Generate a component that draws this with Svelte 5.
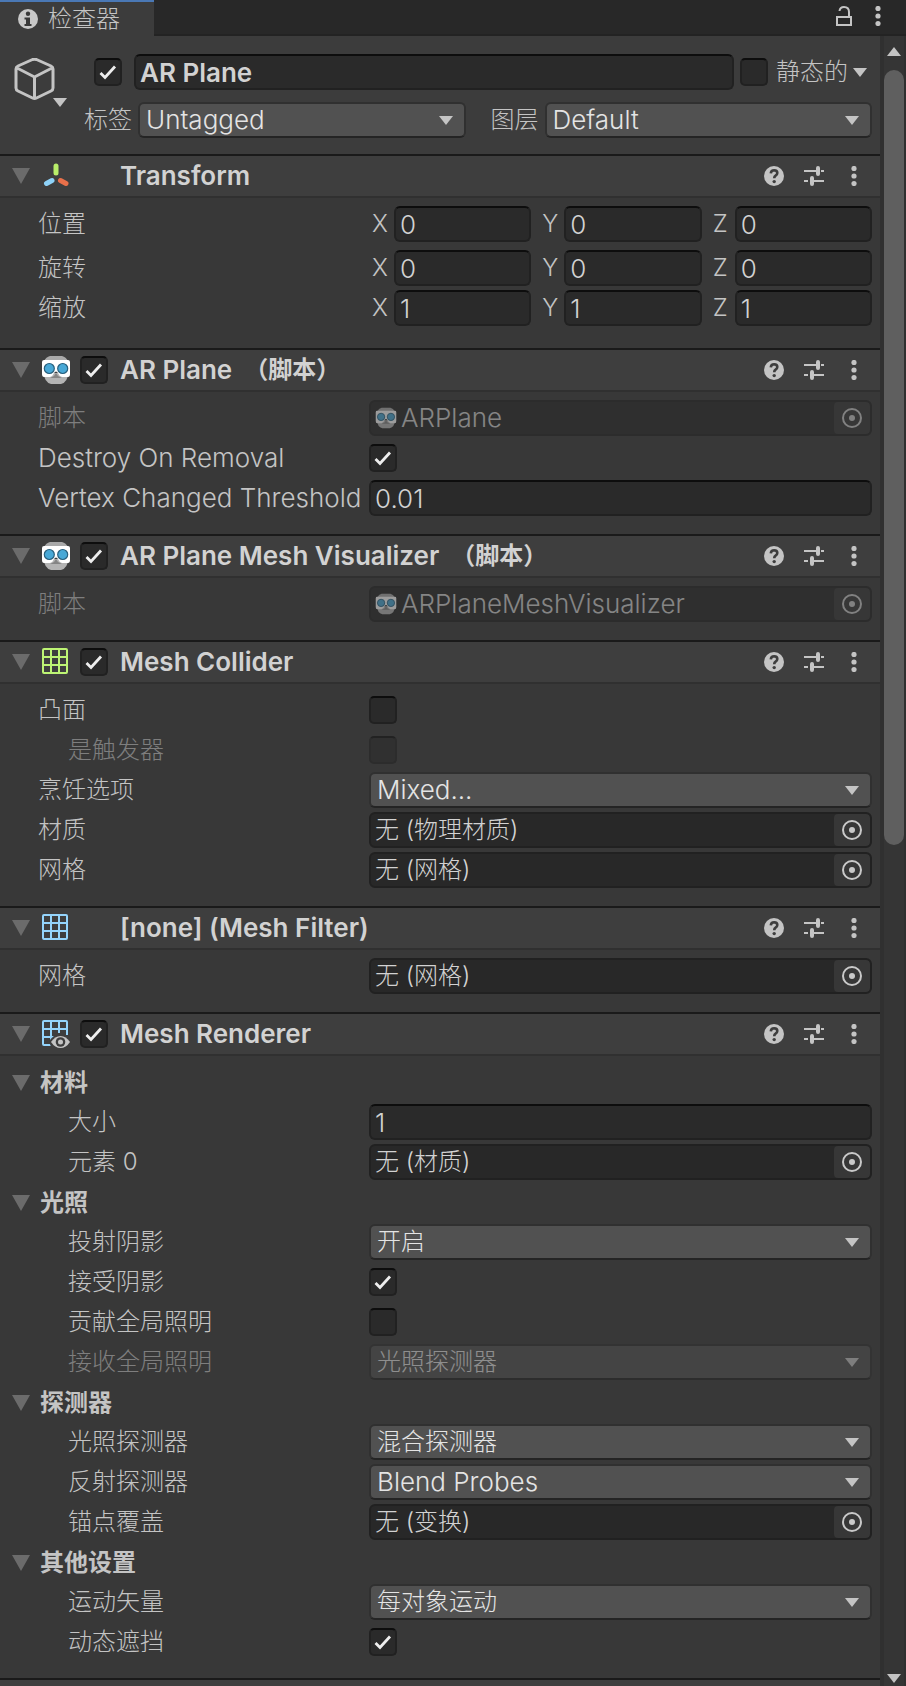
<script>
  const sections = [
    {
      id: 'transform', title: 'Transform', icon: 'axes', kind: 'transform',
      rows: [
        { type: 'vector', label: '位置', values: ['0', '0', '0'] },
        { type: 'vector', label: '旋转', values: ['0', '0', '0'] },
        { type: 'vector', label: '缩放', values: ['1', '1', '1'] }
      ]
    },
    {
      id: 'plane', title: 'AR Plane', suffix: '（脚本）', icon: 'robot', toggle: true,
      rows: [
        { type: 'object', label: '脚本', value: 'ARPlane', icon: true, disabled: true },
        { type: 'check', label: 'Destroy On Removal', checked: true },
        { type: 'text', label: 'Vertex Changed Threshold', value: '0.01' }
      ]
    },
    {
      id: 'visualizer', title: 'AR Plane Mesh Visualizer', suffix: '（脚本）', icon: 'robot', toggle: true,
      rows: [{ type: 'object', label: '脚本', value: 'ARPlaneMeshVisualizer', icon: true, disabled: true }]
    },
    {
      id: 'collider', title: 'Mesh Collider', icon: 'collider', toggle: true,
      rows: [
        { type: 'check', label: '凸面', checked: false },
        { type: 'check', label: '是触发器', checked: false, indent: true, disabled: true },
        { type: 'select', label: '烹饪选项', value: 'Mixed...' },
        { type: 'object', label: '材质', value: '无 (物理材质)' },
        { type: 'object', label: '网格', value: '无 (网格)' }
      ]
    },
    {
      id: 'filter', title: '[none] (Mesh Filter)', icon: 'filter',
      rows: [{ type: 'object', label: '网格', value: '无 (网格)' }]
    },
    {
      id: 'renderer', title: 'Mesh Renderer', icon: 'renderer', toggle: true,
      rows: [
        { type: 'group', label: '材料' },
        { type: 'text', label: '大小', value: '1', indent: true },
        { type: 'object', label: '元素 0', value: '无 (材质)', indent: true },
        { type: 'group', label: '光照' },
        { type: 'select', label: '投射阴影', value: '开启', indent: true },
        { type: 'check', label: '接受阴影', checked: true, indent: true },
        { type: 'check', label: '贡献全局照明', checked: false, indent: true },
        { type: 'select', label: '接收全局照明', value: '光照探测器', indent: true, disabled: true },
        { type: 'group', label: '探测器' },
        { type: 'select', label: '光照探测器', value: '混合探测器', indent: true },
        { type: 'select', label: '反射探测器', value: 'Blend Probes', indent: true },
        { type: 'object', label: '锚点覆盖', value: '无 (变换)', indent: true },
        { type: 'group', label: '其他设置' },
        { type: 'select', label: '运动矢量', value: '每对象运动', indent: true },
        { type: 'check', label: '动态遮挡', checked: true, indent: true }
      ]
    }
  ];
  const axes = ['X', 'Y', 'Z'];

  // Pure Latin strings are set one step larger than Chinese ones.
  const isLatin = (text) => /^[\x20-\x7e]+$/.test(text);
</script>

{#snippet dots()}
  <svg width="20" height="20" viewBox="0 0 20 20" fill="#c4c4c4" aria-hidden="true">
    <circle cx="10" cy="2.5" r="2.6" /><circle cx="10" cy="10" r="2.6" /><circle cx="10" cy="17.5" r="2.6" />
  </svg>
{/snippet}

{#snippet arrow()}
  <svg width="14" height="9" viewBox="0 0 14 9" aria-hidden="true"><path d="M0 0H14L7 9Z" fill="#c4c4c4" /></svg>
{/snippet}

{#snippet fold()}
  <svg width="18" height="16" viewBox="0 0 18 16" aria-hidden="true"><path d="M0 0H18L9 16Z" fill="#6b6b6b" /></svg>
{/snippet}

{#snippet robot(size)}
  <svg width={size} height={size} viewBox="0 0 30 30" aria-hidden="true">
    <path d="M9 1H21Q25 2 27 6H3Q5 2 9 1Z" fill="#a9a9a9" />
    <path d="M3 18H27Q27 27 20 29H10Q3 27 3 18Z" fill="#b4b4b4" />
    <path d="M13 21L15 18L17 21L21 23H9Z" fill="#858585" />
    <path d="M3 5H27Q29 5 29 7V19Q29 22 27 22H21Q18 21 17 18Q15 15 13 18Q12 21 9 22H3Q1 22 1 19V7Q1 5 3 5Z" fill="#fff" />
    <circle cx="8.3" cy="13.5" r="5" fill="#48a8d6" stroke="#275f7d" stroke-width="1.2" />
    <circle cx="21.7" cy="13.5" r="5" fill="#48a8d6" stroke="#275f7d" stroke-width="1.2" />
  </svg>
{/snippet}

{#snippet grid(color)}
  <rect x="2" y="2" width="24" height="24" rx="1" fill="none" stroke={color} stroke-width="2" />
  <path d="M10 2V26M18 2V26M2 10H26M2 18H26" fill="none" stroke={color} stroke-width="2" />
{/snippet}

{#snippet sectionIcon(name)}
  {#if name === 'robot'}
    {@render robot(30)}
  {:else}
    <svg width="30" height="30" viewBox="0 0 30 30" aria-hidden="true">
      {#if name === 'axes'}
        <g stroke-width="5" stroke-linecap="round" fill="none">
          <path d="M15 5V12" stroke="#b9ee6a" />
          <path d="M11 19.500L5.500 22.500" stroke="#8ed2f8" />
          <path d="M19.500 19.500L25 22.500" stroke="#e8704a" />
        </g>
      {:else if name === 'collider'}
        {@render grid('#bdf474')}
      {:else if name === 'filter'}
        {@render grid('#94d4fb')}
      {:else}
        <path d="M10 26H3Q2 26 2 25V3Q2 2 3 2H25Q26 2 26 3V15M10 2V26M18 2V14M2 10H26M2 18H13" fill="none" stroke="#94d4fb" stroke-width="2" />
        <path d="M8 23Q12 15 19.500 15H30V30H11Z" fill="#3e3e3e" />
        <path d="M26 3V16" fill="none" stroke="#94d4fb" stroke-width="2" />
        <path d="M10 23Q14 17 19.500 17T29 23Q25 29 19.500 29T10 23Z" fill="#c4c4c4" />
        <circle cx="19.500" cy="23" r="4.800" fill="#3e3e3e" />
        <circle cx="19.500" cy="23" r="2.500" fill="#c4c4c4" />
      {/if}
    </svg>
  {/if}
{/snippet}

<div class="window">
  <header class="tabs">
    <button class="tab" type="button">
      <svg width="20" height="20" viewBox="0 0 20 20" aria-hidden="true">
        <circle cx="10" cy="10" r="10" fill="#c8c8c8" />
        <circle cx="10" cy="4.700" r="2.200" fill="#383838" />
        <path d="M6.500 8.500H12V15H13.500V17H6.500V15H8V10.500H6.500Z" fill="#383838" />
      </svg>
      <span>检查器</span>
    </button>
    <div class="tab-tools">
      <button class="tool" type="button" aria-label="锁定">
        <svg width="20" height="20" viewBox="0 0 20 20" fill="none" stroke="#c4c4c4" stroke-width="2" aria-hidden="true">
          <rect x="3" y="11" width="14" height="8" /><path d="M5.500 5Q6 1 10 1Q15 1 15 6V11" />
        </svg>
      </button>
      <button class="tool" type="button" aria-label="菜单">{@render dots()}</button>
    </div>
  </header>

  <div class="workspace">
    <main>
      <div class="object">
        <button class="cube" type="button" aria-label="图标">
          <svg width="54" height="50" viewBox="0 0 54 50" aria-hidden="true">
            <path d="M18.500 1.500Q20.500 .8 22.500 1.500L37 8Q39 9 39 11V30Q39 32 37 33L22.500 40Q20.500 41 18.500 40L4 33Q2 32 2 30V11Q2 9 4 8ZM3 10L20.500 19L38 10M20.500 19V40" fill="none" stroke="#c4c4c4" stroke-width="3" stroke-linejoin="round" />
            <path d="M39 40H53L46 49Z" fill="#c4c4c4" />
          </svg>
        </button>
        <div class="object-fields">
          <div class="name-row">
            <input type="checkbox" checked aria-label="启用" />
            <input class="field name latin" type="text" value="AR Plane" aria-label="名称" />
            <input id="static" type="checkbox" />
            <label for="static">静态的</label>
            <button class="plain" type="button" aria-label="静态选项">{@render arrow()}</button>
          </div>
          <div class="tag-row">
            <label for="tag">标签</label>
            <select id="tag" class="latin"><option>Untagged</option></select>
            <label class="layer" for="layer">图层</label>
            <select id="layer" class="latin"><option>Default</option></select>
          </div>
        </div>
      </div>

      {#each sections as s (s.id)}
        <section>
          <div class="head">
            <button class="plain fold" type="button" aria-label="折叠">{@render fold()}</button>
            <span class="badge">{@render sectionIcon(s.icon)}</span>
            <span class="toggle">
              {#if s.toggle}<input type="checkbox" checked aria-label={s.title} />{/if}
            </span>
            <h2><span class="latin">{s.title}</span>{#if s.suffix}<span>{s.suffix}</span>{/if}</h2>
            <button class="tool" type="button" aria-label="帮助">
              <svg width="20" height="20" viewBox="0 0 20 20" aria-hidden="true">
                <circle cx="10" cy="10" r="10" fill="#c4c4c4" />
                <path d="M6.800 7.300Q7 4.200 10.200 4.200Q13.300 4.300 13.300 7Q13.300 8.600 11.600 9.600Q10.200 10.500 10.200 12.200" fill="none" stroke="#3e3e3e" stroke-width="2.600" />
                <circle cx="10.200" cy="15.600" r="1.700" fill="#3e3e3e" />
              </svg>
            </button>
            <button class="tool" type="button" aria-label="预设">
              <svg width="20" height="20" viewBox="0 0 20 20" fill="none" stroke="#c4c4c4" aria-hidden="true">
                <path d="M0 5H11M17 5H20M0 15H4M10 15H20" stroke-width="2" />
                <path d="M14 2V8M8 12V18" stroke-width="4" stroke-linecap="round" />
                <path d="M11 5H14M8 15H10" stroke-width="2" />
              </svg>
            </button>
            <button class="tool" type="button" aria-label="更多">{@render dots()}</button>
          </div>
          <div class={['rows', s.kind]}>
            {#each s.rows as r, i}
              {@const id = `${s.id}-${i}`}
              {#if r.type === 'group'}
                <div class="group">
                  <button class="plain fold" type="button" aria-label={r.label}>{@render fold()}</button>
                  <h3>{r.label}</h3>
                </div>
              {:else if r.type === 'vector'}
                <div class="row" role="group" aria-label={r.label}>
                  <span class="label">{r.label}</span>
                  <div class="vector">
                    {#each axes as a, n}
                      <div class="axis">
                        <label for={`${id}-${a}`}>{a}</label>
                        <input id={`${id}-${a}`} class="field latin" type="text" value={r.values[n]} />
                      </div>
                    {/each}
                  </div>
                </div>
              {:else}
                <div class={['row', { indent: r.indent, disabled: r.disabled }]}>
                  <label class={['label', { latin: isLatin(r.label) }]} for={id}>{r.label}</label>
                  {#if r.type === 'check'}
                    <input {id} type="checkbox" checked={r.checked} disabled={r.disabled} />
                  {:else if r.type === 'text'}
                    <input {id} class="field latin" type="text" value={r.value} />
                  {:else if r.type === 'select'}
                    <select {id} class={{ latin: isLatin(r.value) }} disabled={r.disabled}><option>{r.value}</option></select>
                  {:else}
                    <div class="picker">
                      {#if r.icon}{@render robot(22)}{/if}
                      <input {id} class={{ latin: isLatin(r.value) }} type="text" value={r.value} readonly disabled={r.disabled} />
                      <button type="button" aria-label="选择" disabled={r.disabled}>
                        <svg width="20" height="20" viewBox="0 0 20 20" aria-hidden="true">
                          <circle cx="10" cy="10" r="9" fill="none" stroke="#c9c9c9" stroke-width="2" />
                          <circle cx="10" cy="10" r="3" fill="#c9c9c9" />
                        </svg>
                      </button>
                    </div>
                  {/if}
                </div>
              {/if}
            {/each}
          </div>
        </section>
      {/each}
      <div class="rest"></div>
    </main>

    <div class="scrollbar">
      <button class="plain up" type="button" aria-label="向上">
        <svg width="14" height="9" viewBox="0 0 14 9" aria-hidden="true"><path d="M0 9H14L7 0Z" fill="#c4c4c4" /></svg>
      </button>
      <div class="track"><div class="thumb"></div></div>
      <button class="plain down" type="button" aria-label="向下">{@render arrow()}</button>
    </div>
  </div>
</div>

<style>
  :global(body) {
    margin: 0;
    background: #383838;
  }
  .window {
    display: flex;
    flex-direction: column;
    min-height: 100vh;
    color: #c4c4c4;
    font-family: Inter, 'Noto Sans CJK SC', sans-serif;
    font-size: 24px;
    font-weight: 300;
    line-height: 32px;
  }
  .window *,
  .window *::before {
    box-sizing: border-box;
  }
  button,
  input,
  select {
    margin: 0;
    font: inherit;
    color: inherit;
  }
  button {
    padding: 0;
    border: 0;
    background: none;
  }
  svg {
    display: block;
    flex: none;
  }
  h2,
  h3 {
    margin: 0;
    font-size: 24px;
    font-weight: 600;
    line-height: 32px;
  }
  .window .latin {
    font-size: 26px;
  }

  .tabs {
    display: flex;
    justify-content: space-between;
    height: 36px;
    background: #282828;
    box-shadow: inset 0 -2px #232323;
  }
  .tab {
    display: flex;
    align-items: center;
    gap: 10px;
    width: 154px;
    padding-left: 18px;
    border-top: 2px solid #4a78b5;
    background: #3c3c3c;
  }
  .tab-tools {
    display: flex;
    align-items: center;
    padding-right: 11px;
    padding-bottom: 4px;
  }
  .tab-tools .tool {
    width: 34px;
  }
  .tool {
    display: flex;
    align-items: center;
    justify-content: center;
    width: 40px;
    height: 32px;
  }

  .workspace {
    display: flex;
    flex: 1;
  }
  main {
    display: flex;
    flex-direction: column;
    flex: 1;
    min-width: 0;
  }
  .object {
    display: flex;
    padding: 18px 8px 16px 14px;
    background: #3c3c3c;
  }
  .cube {
    align-self: flex-start;
    padding-top: 4px;
  }
  .object-fields {
    flex: 1;
    min-width: 0;
    display: flex;
    flex-direction: column;
    gap: 12px;
    padding-left: 16px;
  }
  .name-row,
  .tag-row {
    display: flex;
    align-items: center;
  }
  .name-row {
    padding-left: 10px;
  }
  .name-row .name {
    flex: 1;
    margin: 0 6px 0 12px;
    font-weight: 600;
  }
  .name-row label {
    padding: 0 5px 0 8px;
  }
  .name-row .plain {
    padding-right: 5px;
  }
  .tag-row label {
    flex: none;
    width: 54px;
  }
  .tag-row select {
    flex: 1;
  }
  .tag-row .layer {
    width: 79px;
    padding-left: 25px;
  }

  section,
  .rest {
    border-top: 2px solid #1a1a1a;
  }
  .rest {
    flex: 1;
    min-height: 8px;
    background: #3e3e3e;
  }
  .head {
    display: flex;
    align-items: center;
    height: 42px;
    padding: 0 6px 0 12px;
    border-bottom: 2px solid #303030;
    background: #3e3e3e;
  }
  .fold {
    width: 29px;
  }
  .badge {
    width: 30px;
  }
  .toggle {
    display: flex;
    width: 49px;
    padding-left: 9px;
  }
  h2 {
    display: flex;
    flex: 1;
    gap: 12px;
    color: #d2d2d2;
    white-space: nowrap;
  }
  .rows {
    display: flex;
    flex-direction: column;
    gap: 4px;
    padding: 8px 8px 18px 0;
  }
  .transform {
    padding-bottom: 22px;
  }
  .transform .row:first-child {
    margin-bottom: 4px;
  }
  .row {
    display: grid;
    grid-template-columns: 331px minmax(0, 1fr);
    align-items: center;
    min-height: 36px;
    padding-left: 38px;
  }
  .row.indent {
    grid-template-columns: 301px minmax(0, 1fr);
    padding-left: 68px;
  }
  .label {
    white-space: nowrap;
  }
  .disabled .label {
    opacity: 0.5;
  }
  .group {
    display: flex;
    align-items: center;
    height: 36px;
    padding-top: 2px;
    padding-left: 12px;
  }
  .group .fold {
    width: 28px;
  }
  .vector {
    display: grid;
    grid-template-columns: repeat(3, minmax(0, 1fr));
    gap: 8px;
  }
  .axis {
    display: grid;
    grid-template-columns: 25px minmax(0, 1fr);
    align-items: center;
  }
  .axis label {
    padding-left: 3px;
  }

  .field {
    width: 100%;
    min-width: 0;
    height: 36px;
    padding: 0 4px;
    border: 2px solid #212121;
    border-top-color: #0d0d0d;
    border-radius: 6px;
    background: #2a2a2a;
    color: #d2d2d2;
  }
  input[type='checkbox'] {
    appearance: none;
    flex: none;
    width: 28px;
    height: 28px;
    border: 2px solid #212121;
    border-top-color: #0d0d0d;
    border-radius: 5px;
    background: #2a2a2a;
  }
  input[type='checkbox']:checked {
    background: #2a2a2a url("data:image/svg+xml,%3Csvg xmlns='http://www.w3.org/2000/svg' viewBox='0 0 24 24'%3E%3Cpath d='M4.500 13L9 17.500L19 6.500' fill='none' stroke='%23eeeeee' stroke-width='2.800'/%3E%3C/svg%3E") center / 24px 24px no-repeat;
  }
  input[type='checkbox']:disabled {
    opacity: 0.5;
  }
  select {
    appearance: none;
    width: 100%;
    min-width: 0;
    height: 36px;
    padding: 0 36px 0 6px;
    border: 2px solid #303030;
    border-bottom-color: #242424;
    border-radius: 6px;
    background: #515151 url("data:image/svg+xml,%3Csvg xmlns='http://www.w3.org/2000/svg' viewBox='0 0 14 9'%3E%3Cpath d='M0 0H14L7 9Z' fill='%23c4c4c4'/%3E%3C/svg%3E") right 11px center / 14px 9px no-repeat;
    color: #e4e4e4;
  }
  select:disabled {
    opacity: 0.5;
  }
  .picker {
    display: flex;
    align-items: center;
    height: 36px;
    padding-left: 4px;
    border: 2px solid #212121;
    border-radius: 6px;
    background: #282828;
    color: #d2d2d2;
    overflow: hidden;
  }
  .disabled .picker {
    opacity: 0.5;
  }
  .picker input {
    flex: 1;
    min-width: 0;
    height: 32px;
    padding: 0;
    border: 0;
    background: none;
  }
  .disabled .picker input {
    padding-left: 4px;
  }
  .picker button {
    display: flex;
    align-items: center;
    justify-content: center;
    width: 36px;
    height: 32px;
    border-radius: 4px;
    background: #373737;
  }

  .scrollbar {
    display: flex;
    flex-direction: column;
    width: 26px;
    padding: 0 2px 0 4px;
    background: #353535;
    box-shadow: inset 4px 0 #303030, inset -2px 0 #303030;
  }
  .scrollbar .plain {
    display: flex;
    align-items: center;
    justify-content: center;
    height: 34px;
  }
  .scrollbar .up {
    padding-bottom: 3px;
  }
  .scrollbar .down {
    align-items: flex-end;
    padding-bottom: 3px;
  }
  .track {
    flex: 1;
  }
  .thumb {
    height: 49%;
    border-radius: 10px;
    background: #5f5f5f;
  }
</style>
